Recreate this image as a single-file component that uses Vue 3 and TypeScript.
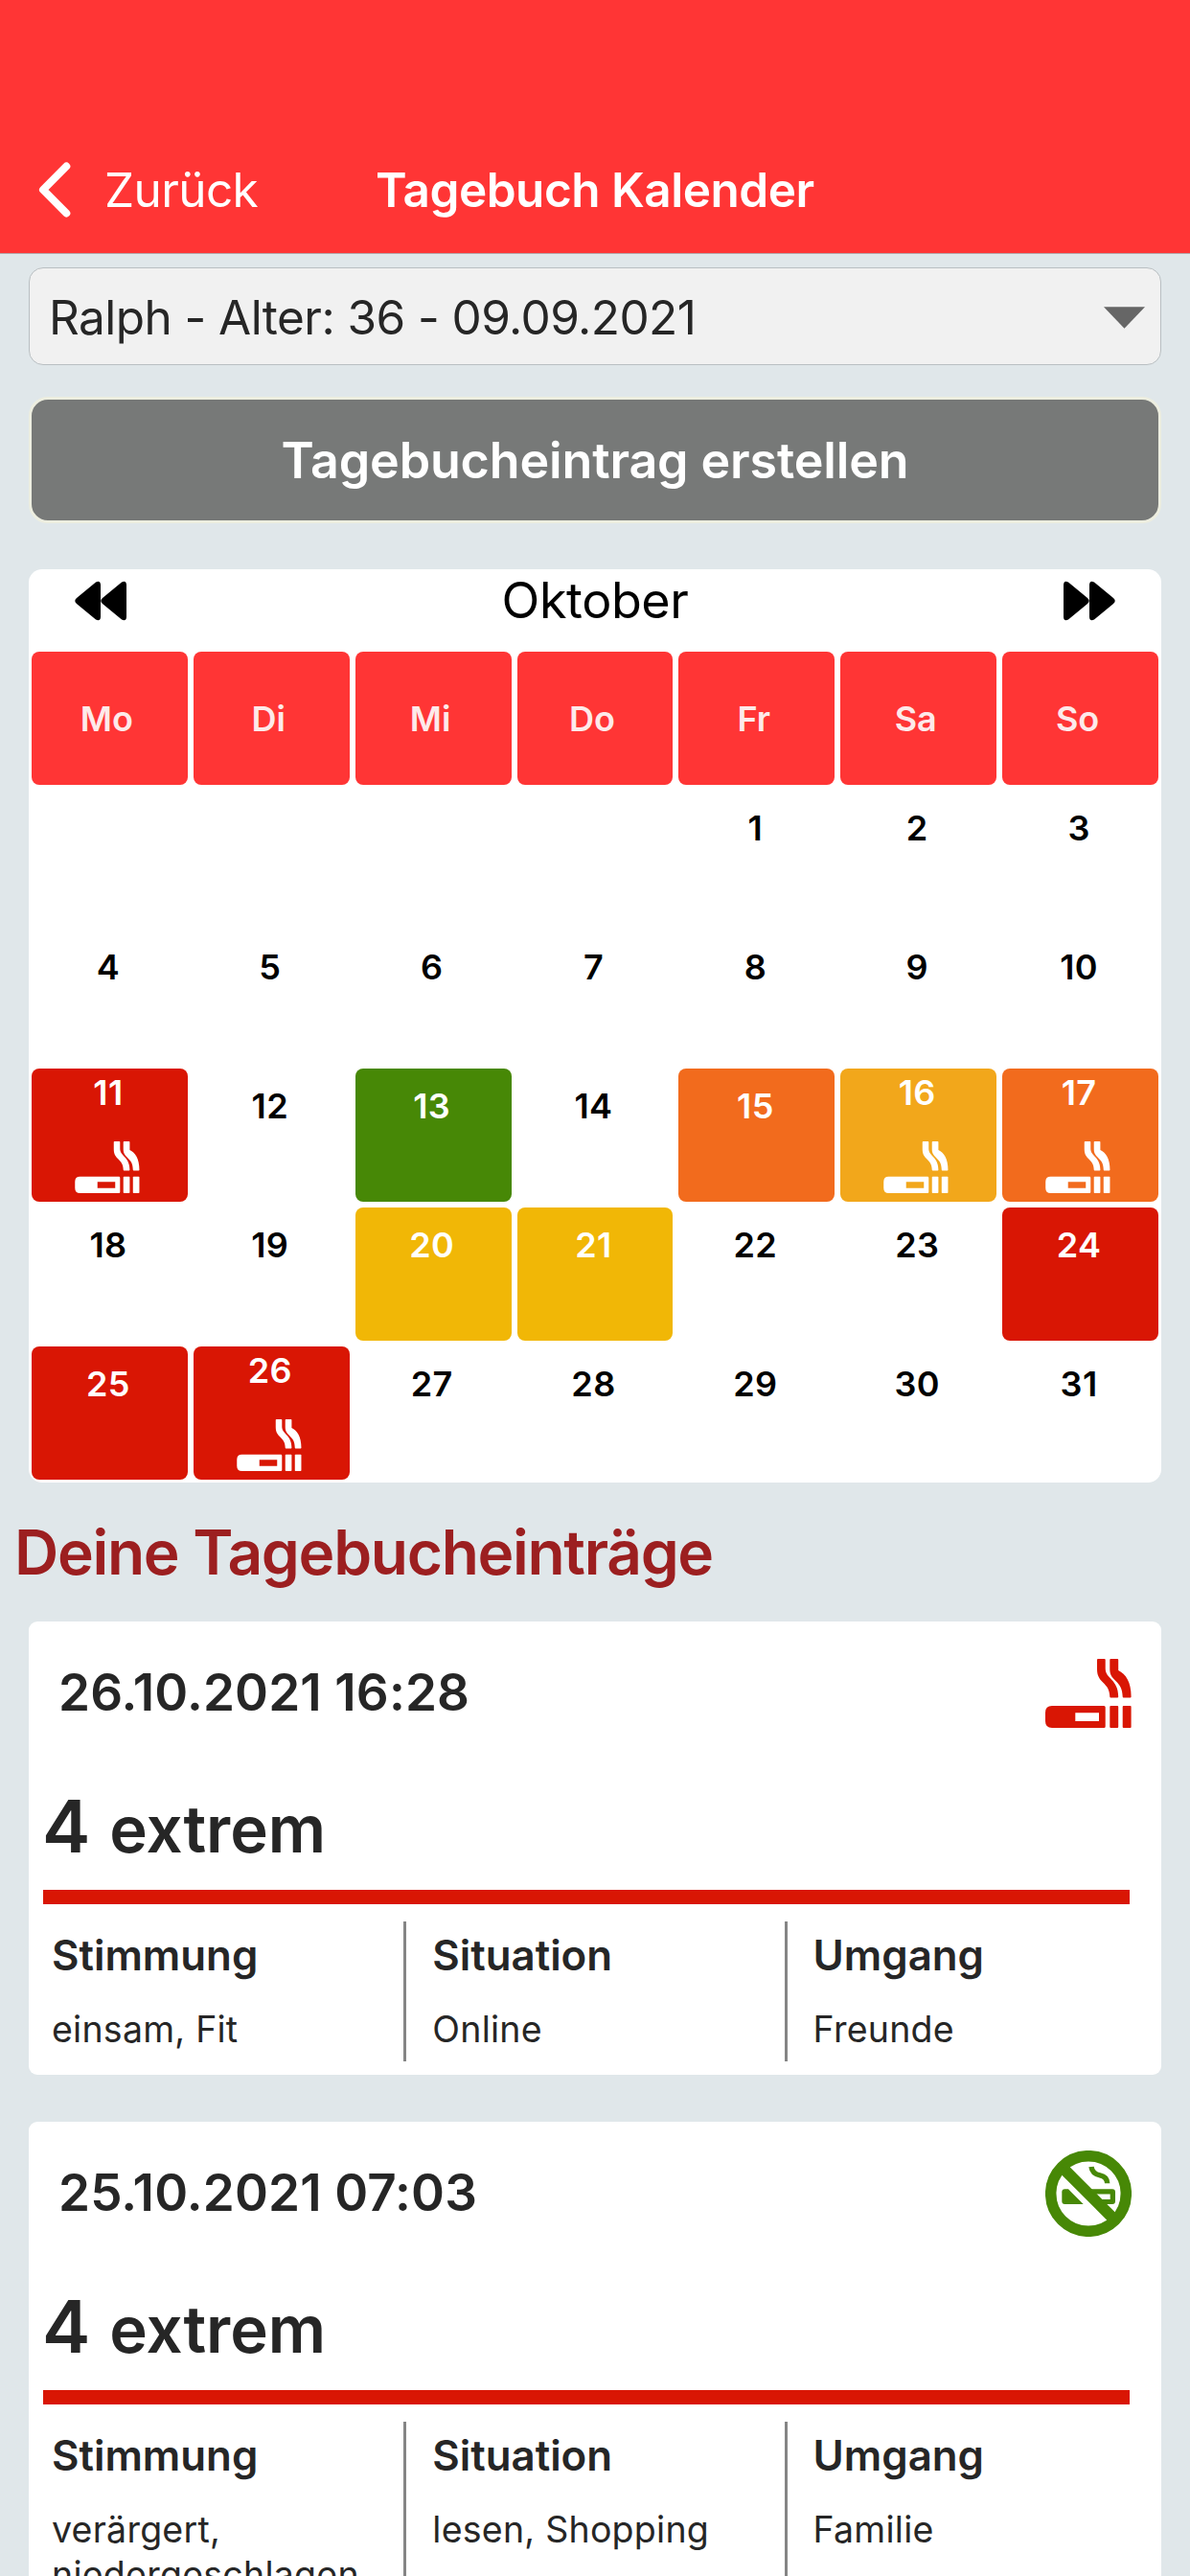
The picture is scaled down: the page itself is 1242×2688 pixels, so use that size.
<script setup lang="ts">
type Level = 'red' | 'green' | 'orange' | 'amber' | 'yellow'

interface Day {
  label: string
  level?: Level
  smoked?: boolean
}

interface Entry {
  date: string
  smoked: boolean
  score: number
  rating: string
  details: { title: string; text: string }[]
}

const weekdays: string[] = ['Mo', 'Di', 'Mi', 'Do', 'Fr', 'Sa', 'So']

const marks: Record<number, { level: Level; smoked?: boolean }> = {
  11: { level: 'red', smoked: true },
  13: { level: 'green' },
  15: { level: 'orange' },
  16: { level: 'amber', smoked: true },
  17: { level: 'orange', smoked: true },
  20: { level: 'yellow' },
  21: { level: 'yellow' },
  24: { level: 'red' },
  25: { level: 'red' },
  26: { level: 'red', smoked: true },
}

const leadingBlanks = 4
const days: Day[] = Array.from({ length: 35 }, (_, i) => {
  const n = i - leadingBlanks + 1
  return n < 1 ? { label: '' } : { label: String(n), ...marks[n] }
})

const entries: Entry[] = [
  {
    date: '26.10.2021 16:28',
    smoked: true,
    score: 4,
    rating: 'extrem',
    details: [
      { title: 'Stimmung', text: 'einsam, Fit' },
      { title: 'Situation', text: 'Online' },
      { title: 'Umgang', text: 'Freunde' },
    ],
  },
  {
    date: '25.10.2021 07:03',
    smoked: false,
    score: 4,
    rating: 'extrem',
    details: [
      { title: 'Stimmung', text: 'verärgert, niedergeschlagen' },
      { title: 'Situation', text: 'lesen, Shopping' },
      { title: 'Umgang', text: 'Familie' },
    ],
  },
]
</script>

<template>
  <div class="page">
    <svg width="0" height="0" class="defs">
      <symbol id="cigarette" viewBox="0 0 90 72">
        <path
          fill-rule="evenodd"
          d="M7 49H61.2Q62.7 49 62.7 50.5V70.5Q62.7 72 61.2 72H7Q0 72 0 65V56Q0 49 7 49ZM31.3 56.3V65H56V56.3Z"
        />
        <rect x="67.3" y="49" width="8.9" height="23" rx="1" />
        <rect x="80.7" y="49" width="8.9" height="23" rx="1" />
        <path d="M55 0H61.7Q62.7 0 62.7 1V10C62.7 21 76.2 21 76.2 39.5Q76.2 40.5 75.2 40.5H68.3Q67.3 40.5 67.3 39.5C67.3 24 54 26 54 11V1Q54 0 55 0Z" />
        <path d="M68.3 0H75.2Q76.2 0 76.2 1V12C84 16 89.6 24 89.6 39.5Q89.6 40.5 88.6 40.5H81.7Q80.7 40.5 80.7 39.5C80.7 22 67.3 24 67.3 11V1Q67.3 0 68.3 0Z" />
      </symbol>
    </svg>

    <header class="topbar">
      <div class="back">
        <svg class="chevron" viewBox="0 0 34 58">
          <path d="M29.3 4.5L5 29L29.3 53.5" fill="none" stroke="#fff" stroke-width="8" stroke-linecap="round" stroke-linejoin="round" />
        </svg>
        <span class="back-label">Zurück</span>
      </div>
      <h1 class="title">Tagebuch Kalender</h1>
    </header>

    <div class="select">
      <span class="select-text">Ralph - Alter: 36 - 09.09.2021</span>
      <svg class="caret" viewBox="0 0 44 23"><path d="M0 0H44L22 23Z" fill="#666" /></svg>
    </div>

    <button class="create"><span>Tagebucheintrag erstellen</span></button>

    <section class="calendar">
      <div class="month">
        <svg class="skip" viewBox="0 0 54 42">
          <path d="M27 4V38Q26.500 43 22 40.500L2 24Q-1.500 21 2 18L22 1.500Q26.500 -1 27 4ZM54 4V38Q53.500 43 49 40.500L29 24Q25.500 21 29 18L49 1.500Q53.500 -1 54 4Z" />
        </svg>
        <span class="month-name">Oktober</span>
        <svg class="skip flip" viewBox="0 0 54 42">
          <path d="M27 4V38Q26.500 43 22 40.500L2 24Q-1.500 21 2 18L22 1.500Q26.500 -1 27 4ZM54 4V38Q53.500 43 49 40.500L29 24Q25.500 21 29 18L49 1.500Q53.500 -1 54 4Z" />
        </svg>
      </div>
      <div class="grid">
        <div v-for="w in weekdays" :key="w" class="cell weekday">{{ w }}</div>
        <div v-for="(d, i) in days" :key="i" class="cell day" :class="[d.level, { marked: d.level, smoked: d.smoked }]">
          <span>{{ d.label }}</span>
          <svg v-if="d.smoked" class="cell-icon"><use href="#cigarette" /></svg>
        </div>
      </div>
    </section>

    <h2 class="heading">Deine Tagebucheinträge</h2>

    <article v-for="e in entries" :key="e.date" class="card">
      <div class="card-head">
        <span class="date">{{ e.date }}</span>
        <svg v-if="e.smoked" class="smoking"><use href="#cigarette" /></svg>
        <svg v-else class="no-smoking" viewBox="0 0 90 90">
          <circle cx="45" cy="45" r="39.3" fill="none" stroke="#478806" stroke-width="11.500" />
          <path d="M18 18L72 72" stroke="#478806" stroke-width="11.700" />
          <path d="M20.300 40.300H24L39.700 56H20.300Q17.300 56 17.300 53V43.300Q17.300 40.300 20.300 40.300Z" />
          <path fill-rule="evenodd" d="M46 40.300H70Q73 40.300 73 43.300V53Q73 56 70 56H61ZM53 45.500L58.500 51H67.700V45.500Z" />
          <path d="M48 17C48.800 23 52.500 25 57 25.800C62 26.800 64.600 29.500 64.700 34.300" fill="none" stroke="#478806" stroke-width="5.400" />
        </svg>
      </div>
      <div class="rating">
        <span class="score">{{ e.score }}</span>
        <span class="level">{{ e.rating }}</span>
      </div>
      <div class="bar"></div>
      <div class="details">
        <div v-for="d in e.details" :key="d.title" class="detail">
          <h3>{{ d.title }}</h3>
          <p>{{ d.text }}</p>
        </div>
      </div>
    </article>
  </div>
</template>

<style>
body {
  margin: 0;
  background: #e0e7ea;
}
</style>

<style scoped>
.page {
  width: 1242px;
  height: 2688px;
  overflow: hidden;
  background: #e0e7ea;
  font-family: Inter, 'Liberation Sans', sans-serif;
  color: #262626;
}
.defs {
  display: block;
}
.topbar {
  box-sizing: border-box;
  height: 265px;
  padding: 132px 0 0 40px;
  display: flex;
  align-items: center;
  background: #ff3535;
  border-bottom: 1px solid #b5a3a6;
  color: #fff;
}
.back {
  width: 352px;
  display: flex;
  align-items: center;
}
.chevron {
  width: 34px;
  height: 58px;
}
.back-label {
  margin-left: 35px;
  font-size: 49.500px;
  letter-spacing: -0.600px;
}
.title {
  margin: 0;
  font-size: 49.500px;
  font-weight: 600;
  white-space: nowrap;
  letter-spacing: -0.500px;
}
.select {
  box-sizing: border-box;
  height: 102px;
  margin: 14px 30px 0;
  padding: 2px 16px 0 20px;
  display: flex;
  align-items: center;
  justify-content: space-between;
  background: #f1f1f1;
  border: 1px solid #b9bfc2;
  border-radius: 15px;
  font-size: 49.500px;
  letter-spacing: -0.560px;
  white-space: nowrap;
}
.caret {
  width: 43px;
  height: 23px;
}
.create {
  display: flex;
  align-items: center;
  justify-content: center;
  box-sizing: border-box;
  width: 1182px;
  height: 132px;
  margin: 33px 30px 48px;
  border: 3px solid #edeee0;
  border-radius: 20px;
  background: #777978;
  color: #fff;
  font: 600 52px Inter, 'Liberation Sans', sans-serif;
  letter-spacing: -0.150px;
}
.calendar {
  height: 953px;
  margin: 0 30px;
  background: #fff;
  border-radius: 14px;
}
.month {
  height: 65px;
  padding: 0 48px 18px;
  display: flex;
  align-items: center;
  justify-content: space-between;
  color: #000;
}
.month-name {
  font-size: 52px;
  letter-spacing: -0.400px;
}
.skip {
  width: 54px;
  height: 42px;
}
.flip {
  transform: scaleX(-1);
}
.grid {
  display: grid;
  grid-template-columns: repeat(7, 1fr);
  grid-auto-rows: 145px;
}
.cell {
  box-sizing: border-box;
  margin: 3px;
  border-radius: 8px;
  font-size: 36px;
  font-weight: 600;
  color: #000;
}
.weekday {
  display: flex;
  align-items: center;
  justify-content: center;
  padding-right: 6px;
  background: #ff3535;
  color: #fdeaea;
}
.day {
  display: flex;
  flex-direction: column;
  align-items: center;
  padding: 17px 3px 9px 0;
  line-height: 44px;
  letter-spacing: 0.400px;
}
.marked {
  color: #fff;
}
.smoked {
  padding-top: 3px;
}
.cell-icon {
  width: 68px;
  height: 54px;
  margin-top: auto;
  margin-right: 2px;
  fill: #fff;
}
.red {
  background: #d91604;
}
.green {
  background: #478806;
}
.orange {
  background: #f26b1d;
}
.amber {
  background: #f2a71b;
}
.yellow {
  background: #f1b706;
}
.heading {
  margin: 0 0 0 15px;
  line-height: 145px;
  font-size: 64px;
  font-weight: 600;
  letter-spacing: -1.300px;
  color: #9c1f20;
  white-space: nowrap;
}
.card {
  box-sizing: border-box;
  min-height: 473px;
  margin: 0 30px 49px;
  background: #fff;
  border-radius: 9px;
}
.card-head {
  height: 148px;
  padding: 0 31px;
  display: flex;
  align-items: center;
  justify-content: space-between;
}
.date {
  font-size: 53px;
  font-weight: 600;
  letter-spacing: 0.120px;
  white-space: nowrap;
}
.smoking {
  width: 90px;
  height: 72px;
  margin-top: 2px;
  fill: #d91604;
}
.no-smoking {
  width: 90px;
  height: 90px;
  margin-top: 2px;
  fill: #478806;
}
.rating {
  height: 132px;
  padding-left: 14px;
  display: flex;
  align-items: baseline;
  font-weight: 600;
  line-height: 132px;
}
.score {
  font-size: 75.600px;
}
.level {
  margin-left: 20px;
  font-size: 67px;
  letter-spacing: -0.100px;
}
.bar {
  height: 15px;
  margin: 0 33px 0 15px;
  background: #d91604;
}
.details {
  display: grid;
  grid-template-columns: repeat(3, 397.300px);
  min-height: 146px;
  margin: 18px 0 0 -3px;
}
.detail {
  box-sizing: border-box;
  padding-left: 27px;
  border-right: 3px solid #858585;
}
.detail:last-child {
  border-right: 0;
}
.detail h3 {
  margin: 0;
  font-size: 43.800px;
  font-weight: 600;
  line-height: 72px;
}
.detail p {
  margin: 18px 0 0;
  font-size: 37.500px;
  line-height: 46.500px;
  letter-spacing: 0.250px;
}
</style>
